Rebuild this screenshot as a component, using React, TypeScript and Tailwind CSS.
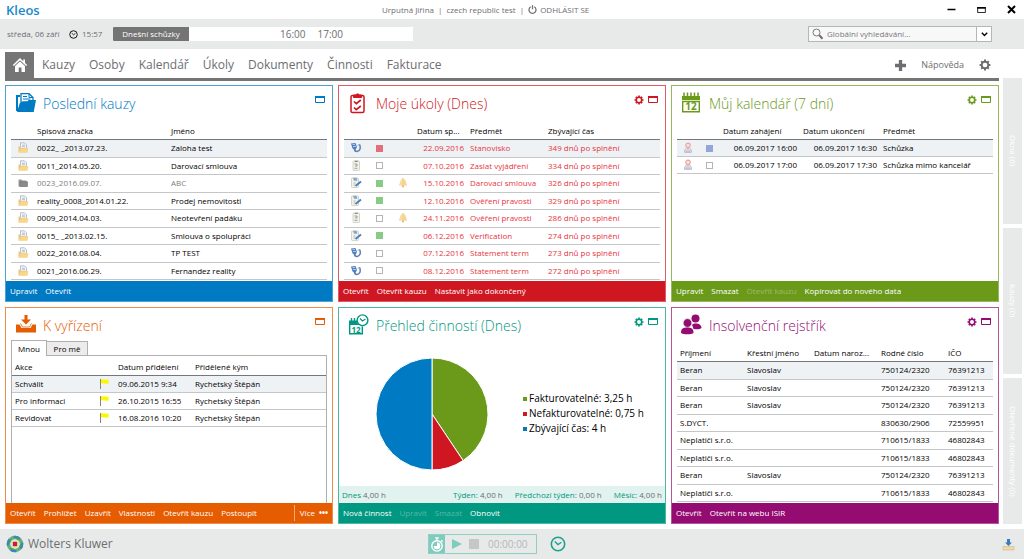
import { ReactNode } from 'react';

interface IconProps {
  className?: string;
}

interface IColumn {
  label: string;
  width?: string;
  align?: 'right' | 'center';
}

interface IRow {
  cells: ReactNode[];
  className?: string;
}

interface IAction {
  label: string;
  disabled?: boolean;
}

const GearIcon = ({ className }: IconProps) => (
  <svg viewBox="0 0 12 12" className={className} fill="none" stroke="currentColor" aria-hidden="true">
    <circle cx="6" cy="6" r="3.3" strokeWidth="1.9" />
    <path
      strokeWidth="2"
      d="M6 .6v2M6 9.4v2M.6 6h2M9.4 6h2M2.2 2.2l1.3 1.3M8.5 8.5l1.3 1.3M2.2 9.8l1.3-1.3M8.5 3.5l1.3-1.3"
    />
  </svg>
);

const WindowIcon = ({ className }: IconProps) => (
  <svg viewBox="0 0 10 7" className={className} fill="none" stroke="currentColor" aria-hidden="true">
    <path d="M.5 .5h9v6h-9z" />
    <path d="M0 1h10" strokeWidth="2" />
  </svg>
);

const ClockIcon = ({ className }: IconProps) => (
  <svg viewBox="0 0 16 16" className={className} fill="none" stroke="currentColor" aria-hidden="true">
    <circle cx="8" cy="8" r="6.7" strokeWidth="1.6" />
    <path d="M4.800 5.500L8 8.600l3.400-2.400" strokeWidth="1.400" />
  </svg>
);

const HomeIcon = () => (
  <svg viewBox="0 0 16 16" className="h-4 w-4" fill="currentColor" aria-hidden="true">
    <path d="M8 1L.8 8l1 1L8 3.2 14.200 9l1-1-2.200-2.100V2.500h-1.800v1.700z" />
    <path d="M3 9l5-4.600L13 9v6H9.500v-4.500h-2.800V15H3z" />
  </svg>
);

const CasesIcon = () => (
  <svg viewBox="0 0 22 22" className="h-[22px] w-[22px]" aria-hidden="true">
    <path d="M2 19V4h3" fill="none" stroke="currentColor" strokeWidth="2" />
    <path d="M6 10V1.700h8l4 3.800V10" fill="#fff" stroke="currentColor" strokeWidth="1.300" />
    <path d="M14 1.700v3.800h4M8 4.500h4M8 7h7.500" fill="none" stroke="currentColor" />
    <path d="M8 9.300h4.500l1.200-1.300H21l-2.300 12H2l3-9.500z" fill="currentColor" />
  </svg>
);

const TasksIcon = () => (
  <svg viewBox="0 0 22 22" className="h-[22px] w-[22px]" fill="none" stroke="currentColor" aria-hidden="true">
    <rect x="3" y="3.500" width="13" height="17" rx="1.500" strokeWidth="1.500" />
    <path d="M5.500 5.500V3H8a1.700 1.700 0 013.200 0h2.500v2.500z" fill="currentColor" />
    <path d="M6 9.500l2.300 2.200L12.800 8M6 15.500l2.300 2.200 4.500-3.700" strokeWidth="1.700" />
  </svg>
);

const CalendarIcon = () => (
  <svg viewBox="0 0 22 22" className="h-[22px] w-[22px]" aria-hidden="true">
    <path d="M3 .5v4M6.500 .5v4M10 .5v4M13.500 .5v4M17 .5v4" stroke="currentColor" strokeWidth="1.500" />
    <path d="M1 4h18v4H1z" fill="currentColor" />
    <path d="M1.700 9.500h16.600v10.300H1.700z" fill="none" stroke="currentColor" strokeWidth="1.400" />
    <text x="10" y="18.200" textAnchor="middle" fontSize="10" fontWeight="700" fill="currentColor">
      12
    </text>
  </svg>
);

const InboxIcon = () => (
  <svg viewBox="0 0 22 22" className="h-[22px] w-[22px]" fill="currentColor" aria-hidden="true">
    <path d="M9.500 1h3v4.500h3.500L11 10.500 6 5.500h3.500z" />
    <path d="M1 10.500h3.500l2 3.500h9l2-3.500H21v8H1z" />
    <path d="M5.500 9.500l2 3.500h7l2-3.500" fill="none" stroke="currentColor" strokeWidth=".8" />
  </svg>
);

const ActivitiesIcon = () => (
  <svg viewBox="0 0 22 22" className="h-[22px] w-[22px]" aria-hidden="true">
    <path d="M3.500 4v3M6.500 4v3" stroke="currentColor" strokeWidth="1.400" />
    <path d="M1 6.500h8v3h6v1.500H1z" fill="currentColor" />
    <path d="M1.700 11v8.800h12.600V12.500" fill="none" stroke="currentColor" strokeWidth="1.400" />
    <text x="8" y="18.600" textAnchor="middle" fontSize="8" fontWeight="700" fill="currentColor">
      12
    </text>
    <circle cx="14.500" cy="6.300" r="5.400" fill="#fff" stroke="currentColor" strokeWidth="1.400" />
    <path d="M12 4.500L14.500 7l3-2" fill="none" stroke="currentColor" strokeWidth="1.200" />
  </svg>
);

const PeopleIcon = () => (
  <svg viewBox="0 0 22 22" className="h-[22px] w-[22px]" fill="currentColor" aria-hidden="true">
    <circle cx="14.500" cy="4.500" r="4" />
    <path d="M11 10.500c2-1.800 9.500-1.800 9.500 3.500-1.500 1.500-5 1.500-8 1z" />
    <circle cx="6.500" cy="9" r="4.400" stroke="#fff" strokeWidth=".7" />
    <path d="M0 19c0-5 2.500-5.500 6.200-5.500s6.300.5 6.300 5.500c-2 1.800-10.500 1.800-12.500 0z" />
  </svg>
);

const FolderRowIcon = () => (
  <svg viewBox="0 0 12 12" className="mx-auto h-3 w-3" aria-hidden="true">
    <path d="M3.500 6V.8h4l2 2V8" fill="#f4f6fa" stroke="#9aa7bd" strokeWidth=".7" />
    <path d="M5 3.200h3M5 4.700h3" stroke="#8c9bb5" strokeWidth=".6" />
    <path d="M1.500 10.500V4.500h2l1 1.500h6v4.500z" fill="#edc57a" />
    <path d="M1.500 10.500L4 6.500h7.500L10 10.500z" fill="#f8d78c" />
  </svg>
);

const ClosedFolderRowIcon = () => (
  <svg viewBox="0 0 12 12" className="mx-auto h-3 w-3" aria-hidden="true">
    <path d="M1.500 9.500V2.500h3l1 1h4V9.500z" fill="#999" />
    <path d="M3 4.800h7.500V9.500H3z" fill="#8b8b8b" stroke="#6f6f6f" strokeWidth=".6" />
  </svg>
);

const HearingIcon = () => (
  <svg viewBox="0 0 12 12" className="mx-auto h-3 w-3" aria-hidden="true">
    <path d="M1 1.500l4.500-.5 1.500 4-1.500 3-3-1.500z" fill="#4f7fc0" />
    <path d="M2.500 2.500h2.500M3 4.500h3" stroke="#dce8f7" strokeWidth=".7" />
    <path d="M9.800 3c1.200 3 .2 6-2.800 6.500-1.800 0-2.500-1-2.500-2.500" fill="none" stroke="#5a7fb4" strokeWidth="1.500" />
    <path d="M7.800 3.200l2.500-.8" stroke="#7c93b6" />
  </svg>
);

const NoteIcon = () => (
  <svg viewBox="0 0 12 12" className="mx-auto h-3 w-3" aria-hidden="true">
    <rect x="3" y="1" width="6.500" height="9.500" rx=".8" fill="#f4f3ea" stroke="#c4c4ba" strokeWidth=".7" />
    <path d="M4.800 .7h3v1.300h-3z" fill="#8c8c8c" />
    <path d="M4.500 4h2.500v2H5M4.500 8.300h3" fill="none" stroke="#8d9791" strokeWidth=".9" />
  </svg>
);

const NotePenIcon = () => (
  <svg viewBox="0 0 12 12" className="mx-auto h-3 w-3" aria-hidden="true">
    <rect x="1.500" y="1" width="7" height="9.500" rx=".8" fill="#f4f3ea" stroke="#c4c4ba" strokeWidth=".7" />
    <path d="M3 .8h3.500l1 3H4z" fill="#8aa5c8" />
    <path d="M5.500 9l5.500-4.500" stroke="#4a7fc4" strokeWidth="2" />
    <path d="M3.500 6h2M3.500 8h1.500" stroke="#9aa4a0" strokeWidth=".8" />
  </svg>
);

const BellIcon = () => (
  <svg viewBox="0 0 12 12" className="mx-auto h-3 w-3" aria-hidden="true">
    <path d="M6 1c.8 0 1 .7 1 1 2 1 1.800 4.200 3.200 6.500H1.800C3.200 6.200 3 3 5 2c0-.3.2-1 1-1z" fill="#f5d391" />
    <path d="M6 2.500c-1.800 1-1.500 4-2.500 6" fill="none" stroke="#fae6b8" />
    <circle cx="6" cy="9.300" r="1.100" fill="#e0b569" />
  </svg>
);

const PersonRowIcon = () => (
  <svg viewBox="0 0 12 12" className="mx-auto h-3 w-3" aria-hidden="true">
    <circle cx="6" cy="3.300" r="2.200" fill="#fbe4dc" stroke="#eba99c" strokeWidth="1.200" />
    <path d="M2.500 10.300c0-3 1-4.500 3.500-4.500s3.500 1.500 3.500 4.500z" fill="#e9ecf7" stroke="#a5aed0" strokeWidth=".8" />
    <path d="M6 6v4.300M4.300 8v2.300M7.700 8v2.300" stroke="#d9a09f" strokeWidth=".8" />
  </svg>
);

const FlagIcon = () => (
  <svg viewBox="0 0 12 12" className="mx-auto h-3 w-3" aria-hidden="true">
    <path d="M1.500 1v10" stroke="#858585" />
    <path d="M2 1.500c2-.8 4 .8 7.500 0V5.500c-3 .8-5.500-.8-7.500 0z" fill="#fcf800" />
  </svg>
);

const WkLogo = () => (
  <svg viewBox="0 0 18 18" className="h-[18px] w-[18px]" aria-hidden="true">
    <circle cx="9" cy="9" r="8.300" fill="#5fae8b" />
    <circle cx="9" cy="9" r="7.200" fill="none" stroke="#3a86c4" strokeWidth="2.200" strokeDasharray="6.300 5" strokeDashoffset="1.500" />
    <circle cx="9" cy="9" r="5.200" fill="#8cc63f" />
    <circle cx="9" cy="9" r="5.600" fill="none" stroke="#4fa04b" strokeWidth="1.400" strokeDasharray="4.400 4.400" />
    <path d="M9 4l3.600 1.400L14 9l-1.400 3.600L9 14l-3.600-1.400L4 9l1.400-3.600z" fill="#d6ecc0" />
    <rect x="6.800" y="6.800" width="4.400" height="4.400" rx=".8" fill="#d4174a" />
  </svg>
);

const StopwatchIcon = () => (
  <svg viewBox="0 0 16 18" className="h-[17px] w-4" fill="none" stroke="currentColor" aria-hidden="true">
    <circle cx="8" cy="10.500" r="5.500" strokeWidth="1.500" />
    <path d="M6 2h4M8 2v3M12.500 4.500l1.500 1.500" strokeWidth="1.400" />
    <path d="M8 10.500V7a3.500 3.500 0 11-3.500 3.500z" fill="currentColor" stroke="none" />
  </svg>
);

const Mark = ({ className }: IconProps) => (
  <span className={`mx-auto block h-[7px] w-[7px] border ${className}`} />
);

const emptyMark = <Mark className="border-[#b4b4b4] bg-white" />;
const redMark = <Mark className="border-[#e0707a] bg-[#e0707a]" />;
const greenMark = <Mark className="border-[#86cc86] bg-[#86cc86]" />;
const blueMark = <Mark className="border-[#95a5dc] bg-[#95a5dc]" />;

const alignClass = (column: IColumn) => {
  if (column.align === 'right') return 'text-right pr-[3px]';
  if (column.align === 'center') return 'px-0';
  return 'pl-[3px]';
};

const DataTable = ({
  columns,
  rows,
  className = '',
}: {
  columns: IColumn[];
  rows: IRow[];
  className?: string;
}) => (
  <table className={`w-full table-fixed border-separate border-spacing-0 leading-3 text-black ${className}`}>
    <colgroup>
      {columns.map((column, index) => (
        <col key={index} className={column.width} />
      ))}
    </colgroup>
    <thead>
      <tr className="h-[17px]">
        {columns.map((column, index) => (
          <th
            key={index}
            className="truncate border-b border-[#737780] p-0 pl-[3px] text-left font-normal"
          >
            {column.label}
          </th>
        ))}
      </tr>
    </thead>
    <tbody>
      {rows.map((row, index) => (
        <tr key={index} className={`${row.className ?? ''} ${index === 0 ? 'bg-[#eff2f5]' : ''}`}>
          {row.cells.map((cell, cellIndex) => (
            <td
              key={cellIndex}
              className={`h-[17px] whitespace-nowrap border-b border-[#c4c6c8] py-0 ${alignClass(columns[cellIndex])}`}
            >
              {cell}
            </td>
          ))}
        </tr>
      ))}
    </tbody>
  </table>
);

const Panel = ({
  title,
  icon,
  borderClass,
  textClass,
  barClass,
  actions,
  hasSettings,
  more,
  children,
}: {
  title: string;
  icon: ReactNode;
  borderClass: string;
  textClass: string;
  barClass: string;
  actions: IAction[];
  hasSettings?: boolean;
  more?: boolean;
  children: ReactNode;
}) => (
  <section className={`flex min-w-0 flex-col border ${borderClass}`}>
    <header className={`flex h-[37px] items-start gap-[6px] pl-[9px] pr-[7px] pt-[6px] ${textClass}`}>
      {icon}
      <h2 className="flex-1 whitespace-nowrap text-[14px] font-light leading-6">{title}</h2>
      <div className="flex items-center gap-1 pt-[2px]">
        {hasSettings && (
          <button type="button" aria-label="Nastavení">
            <GearIcon className="h-[10px] w-[10px]" />
          </button>
        )}
        <button type="button" aria-label="Maximalizovat" className="py-[2px]">
          <WindowIcon className="h-[7px] w-[10px]" />
        </button>
      </div>
    </header>
    <div className="flex flex-1 flex-col">{children}</div>
    <footer className={`flex h-5 items-center gap-[8px] px-1 text-white ${barClass}`}>
      {actions.map((action) => (
        <button
          key={action.label}
          type="button"
          disabled={action.disabled}
          className="whitespace-nowrap disabled:opacity-30"
        >
          {action.label}
        </button>
      ))}
      {more && (
        <button type="button" className="ml-auto flex h-4 items-center gap-1 border-l border-white/50 pl-[5px]">
          Více <span className="font-bold">•••</span>
        </button>
      )}
    </footer>
  </section>
);

const caseColumns: IColumn[] = [
  { label: '', width: 'w-[23px]', align: 'center' },
  { label: 'Spisová značka', width: 'w-[134px]' },
  { label: 'Jméno' },
];

const cases = [
  ['0022_ _2013.07.23.', 'Zaloha test'],
  ['0011_2014.05.20.', 'Darovací smlouva'],
  ['0023_2016.09.07.', 'ABC'],
  ['reality_0008_2014.01.22.', 'Prodej nemovitosti'],
  ['0009_2014.04.03.', 'Neotevření padáku'],
  ['0015_ _2013.02.15.', 'Smlouva o spolupráci'],
  ['0022_2016.08.04.', 'TP TEST'],
  ['0021_2016.06.29.', 'Fernandez reality'],
];

const caseRows: IRow[] = cases.map(([number, name]) => {
  const closed = name === 'ABC';
  return {
    cells: [closed ? <ClosedFolderRowIcon /> : <FolderRowIcon />, number, name],
    className: closed ? 'text-[#808080]' : '',
  };
});

const taskColumns: IColumn[] = [
  { label: '', width: 'w-[23px]', align: 'center' },
  { label: '', width: 'w-[24px]', align: 'center' },
  { label: '', width: 'w-[23px]', align: 'center' },
  { label: 'Datum sp...', width: 'w-[53px]', align: 'right' },
  { label: 'Předmět', width: 'w-[78px]' },
  { label: 'Zbývající čas' },
];

const taskRows: IRow[] = [
  [<HearingIcon />, redMark, null, '22.09.2016', 'Stanovisko', '349 dnů po splnění'],
  [<NoteIcon />, emptyMark, null, '07.10.2016', 'Zaslat vyjádření', '334 dnů po splnění'],
  [<NotePenIcon />, greenMark, <BellIcon />, '15.10.2016', 'Darovací smlouva', '326 dnů po splnění'],
  [<NotePenIcon />, greenMark, null, '12.10.2016', 'Ověření pravosti', '329 dnů po splnění'],
  [<NoteIcon />, emptyMark, <BellIcon />, '24.11.2016', 'Ověření pravosti', '286 dnů po splnění'],
  [<NotePenIcon />, greenMark, null, '06.12.2016', 'Verification', '274 dnů po splnění'],
  [<HearingIcon />, emptyMark, null, '07.12.2016', 'Statement term', '273 dnů po splnění'],
  [<HearingIcon />, emptyMark, null, '08.12.2016', 'Statement term', '272 dnů po splnění'],
].map((cells) => ({ cells, className: 'text-[#e8343d]' }));

const calendarColumns: IColumn[] = [
  { label: '', width: 'w-[21px]', align: 'center' },
  { label: '', width: 'w-[22px]', align: 'center' },
  { label: 'Datum zahájení', width: 'w-[80px]', align: 'right' },
  { label: 'Datum ukončení', width: 'w-[80px]', align: 'right' },
  { label: 'Předmět' },
];

const calendarRows: IRow[] = [
  { cells: [<PersonRowIcon />, blueMark, '06.09.2017 16:00', '06.09.2017 16:30', 'Schůzka'] },
  { cells: [<PersonRowIcon />, emptyMark, '06.09.2017 17:00', '06.09.2017 17:30', 'Schůzka mimo kancelář'] },
];

const approvalColumns: IColumn[] = [
  { label: 'Akce', width: 'w-[83px]' },
  { label: '', width: 'w-[20px]', align: 'center' },
  { label: 'Datum přidělení', width: 'w-[77px]' },
  { label: 'Přidělené kým' },
];

const approvalRows: IRow[] = [
  ['Schválit', '09.06.2015 9:34'],
  ['Pro informaci', '26.10.2015 16:55'],
  ['Revidovat', '16.08.2016 10:20'],
].map(([action, date]) => ({ cells: [action, <FlagIcon />, date, 'Rychetský Štěpán'] }));

const insolvencyColumns: IColumn[] = [
  { label: 'Příjmení', width: 'w-[67px]' },
  { label: 'Křestní jméno', width: 'w-[67px]' },
  { label: 'Datum naroz...', width: 'w-[67px]' },
  { label: 'Rodné číslo', width: 'w-[67px]' },
  { label: 'IČO' },
];

const insolvencyRows: IRow[] = [
  ['Beran', 'Slavoslav', '', '750124/2320', '76391213'],
  ['Beran', 'Slavoslav', '', '750124/2320', '76391213'],
  ['Beran', 'Slavoslav', '', '750124/2320', '76391213'],
  ['S.DYCT.', '', '', '830630/2906', '72559951'],
  ['Neplatiči s.r.o.', '', '', '710615/1833', '46802843'],
  ['Neplatiči s.r.o.', '', '', '710615/1833', '46802843'],
  ['Beran', 'Slavoslav', '', '750124/2320', '76391213'],
  ['Neplatiči s.r.o.', '', '', '710615/1833', '46802843'],
].map((cells) => ({ cells }));

const activity = [
  { label: 'Fakturovatelné: 3,25 h', hours: 3.25, fill: '#6b9a1b', dot: 'bg-[#6b9a1b]' },
  { label: 'Nefakturovatelné: 0,75 h', hours: 0.75, fill: '#cf1722', dot: 'bg-[#cf1722]' },
  { label: 'Zbývající čas: 4 h', hours: 4, fill: '#007ac3', dot: 'bg-[#007ac3]' },
];

const PieChart = () => {
  const total = activity.reduce((sum, item) => sum + item.hours, 0);
  const point = (hours: number) => {
    const angle = (hours / total) * Math.PI * 2;
    return `${57 + 56 * Math.sin(angle)} ${57 - 56 * Math.cos(angle)}`;
  };
  let start = 0;
  return (
    <svg viewBox="0 0 114 114" className="h-[114px] w-[114px]" role="img" aria-label="Přehled činností">
      {activity.map((item) => {
        const from = start;
        start += item.hours;
        return (
          <path
            key={item.label}
            d={`M57 57L${point(from)}A56 56 0 0 1 ${point(start)}Z`}
            fill={item.fill}
            stroke="#fff"
            strokeWidth="1"
          />
        );
      })}
    </svg>
  );
};

const navItems = ['Kauzy', 'Osoby', 'Kalendář', 'Úkoly', 'Dokumenty', 'Činnosti', 'Fakturace'];
const sideTabs = ['Okna (0)', 'Kauzy (0)', 'Otevřené dokumenty (0)'];

const summary = [
  { label: 'Týden:', value: '4,00 h' },
  { label: 'Předchozí týden:', value: '0,00 h' },
  { label: 'Měsíc:', value: '4,00 h' },
];

export default function App() {
  return (
    <div className="flex min-h-screen flex-col bg-white font-['Open_Sans','Noto_Sans',sans-serif] text-[8px] leading-3 text-[#6d6e71]">
      <div className="flex h-[19px] items-center pl-[6px] pr-2">
        <div className="w-[376px] text-[13px] font-semibold leading-4 text-[#1a8acb]">Kleos</div>
        <div className="flex items-center gap-1">
          <span>Urputná Jiřina</span>
          <span>|</span>
          <span>czech republic test</span>
          <span>|</span>
          <button type="button" className="flex items-center gap-[3px]">
            <svg viewBox="0 0 10 10" className="h-[9px] w-[9px]" fill="none" stroke="currentColor" strokeWidth="1.400" aria-hidden="true">
              <path d="M3 2a3.900 3.900 0 104 0M5 .3v4.500" />
            </svg>
            ODHLÁSIT SE
          </button>
        </div>
        <div className="ml-auto flex items-center gap-[21px] text-black">
          <button type="button" aria-label="Minimalizovat">
            <svg viewBox="0 0 9 9" className="h-[9px] w-[9px]" stroke="currentColor" strokeWidth="1.500" aria-hidden="true">
              <path d="M.5 4.500h8" />
            </svg>
          </button>
          <button type="button" aria-label="Obnovit okno">
            <WindowIcon className="h-[6px] w-[9px]" />
          </button>
          <button type="button" aria-label="Zavřít">
            <svg viewBox="0 0 9 9" className="h-[9px] w-[9px]" stroke="currentColor" strokeWidth="2" aria-hidden="true">
              <path d="M1 1l7 7M8 1L1 8" />
            </svg>
          </button>
        </div>
      </div>

      <div className="flex h-[30px] items-center bg-[#e8eaea] pl-[7px] pr-8">
        <span className="w-[62px] whitespace-nowrap">středa, 06 září</span>
        <ClockIcon className="h-[9px] w-[9px] text-black" />
        <span className="w-[35px] pl-1">15:57</span>
        <div className="flex h-[14px] w-[300px] items-center bg-white">
          <span className="flex h-full w-[76px] items-center justify-center rounded-l-[1px] bg-[#747474] text-white">
            Dnešní schůzky
          </span>
          <span className="ml-auto mr-[12px] text-[10px]">16:00</span>
          <span className="mr-[70px] text-[10px]">17:00</span>
        </div>
        <div className="ml-auto flex h-[16px] w-[184px] border border-[#b4b6b8] bg-[#f8f8f8]">
          <label htmlFor="search" className="flex items-center pl-[3px]" aria-label="Globální vyhledávání">
            <svg viewBox="0 0 12 12" className="h-3 w-3" fill="none" stroke="currentColor" aria-hidden="true">
              <circle cx="4.500" cy="4.500" r="3.500" strokeWidth=".9" />
              <path d="M7.300 7.300l3.200 3.400" strokeWidth="2" />
            </svg>
          </label>
          <input
            id="search"
            type="text"
            placeholder="Globální vyhledávání..."
            className="min-w-0 flex-1 pl-[3px] outline-none placeholder:text-[#77787b]"
          />
          <button type="button" aria-label="Rozbalit" className="flex w-[15px] items-center justify-center border-l border-[#b4b6b8] bg-white text-black">
            <svg viewBox="0 0 7 5" className="h-[5px] w-[7px]" fill="none" stroke="currentColor" strokeWidth="1.400" aria-hidden="true">
              <path d="M.8 .8l2.700 2.700L6.200 .8" />
            </svg>
          </button>
        </div>
      </div>

      <div className="flex flex-1 gap-1 pb-[5px] pl-[5px] pr-[2px] pt-[3px]">
        <div className="flex min-w-0 flex-1 flex-col gap-1">
          <nav className="flex h-[29px] items-center border-b-3 border-[#757575] text-[12px]">
            <a href="#home" aria-label="Domů" className="flex h-full w-[29px] items-center justify-center bg-[#757575] text-white">
              <HomeIcon />
            </a>
            <div className="flex gap-[14px] pl-2">
              {navItems.map((item) => (
                <a key={item} href={`#${item}`} className="leading-5">
                  {item}
                </a>
              ))}
            </div>
            <div className="ml-auto flex items-center gap-[15px] pr-2">
              <button type="button" aria-label="Přidat">
                <svg viewBox="0 0 10 10" className="h-[11px] w-[11px]" stroke="currentColor" strokeWidth="3" aria-hidden="true">
                  <path d="M5 0v10M0 5h10" />
                </svg>
              </button>
              <a href="#help" className="text-[9px]">
                Nápověda
              </a>
              <button type="button" aria-label="Nastavení aplikace">
                <GearIcon className="h-3 w-3" />
              </button>
            </div>
          </nav>

          <main className="grid flex-1 auto-rows-fr grid-cols-3 gap-[5px]">
            <Panel
              title="Poslední kauzy"
              icon={<CasesIcon />}
              borderClass="border-[#007ac3]/70"
              textClass="text-[#007ac3]"
              barClass="bg-[#007ac3]"
              actions={[{ label: 'Upravit' }, { label: 'Otevřít' }]}
            >
              <div className="px-[5px]">
                <DataTable columns={caseColumns} rows={caseRows} className="h-[157px]" />
              </div>
            </Panel>

            <Panel
              title="Moje úkoly (Dnes)"
              icon={<TasksIcon />}
              borderClass="border-[#cf1722]/70"
              textClass="text-[#cf1722]"
              barClass="bg-[#cf1722]"
              hasSettings
              actions={[{ label: 'Otevřít' }, { label: 'Otevřít kauzu' }, { label: 'Nastavit jako dokončený' }]}
            >
              <div className="px-[5px]">
                <DataTable columns={taskColumns} rows={taskRows} className="h-[157px]" />
              </div>
            </Panel>

            <Panel
              title="Můj kalendář (7 dní)"
              icon={<CalendarIcon />}
              borderClass="border-[#6b9a1b]/70"
              textClass="text-[#6b9a1b]"
              barClass="bg-[#6b9a1b]"
              hasSettings
              actions={[
                { label: 'Upravit' },
                { label: 'Smazat' },
                { label: 'Otevřít kauzu', disabled: true },
                { label: 'Kopírovat do nového data' },
              ]}
            >
              <div className="px-[5px]">
                <DataTable columns={calendarColumns} rows={calendarRows} />
              </div>
            </Panel>

            <Panel
              title="K vyřízení"
              icon={<InboxIcon />}
              borderClass="border-[#e65c00]/70"
              textClass="text-[#e65c00]"
              barClass="bg-[#e65c00]"
              more
              actions={[
                { label: 'Otevřít' },
                { label: 'Prohlížet' },
                { label: 'Uzavřít' },
                { label: 'Vlastnosti' },
                { label: 'Otevřít kauzu' },
                { label: 'Postoupit' },
              ]}
            >
              <div className="flex flex-1 flex-col px-[5px]">
                <div role="tablist" className="-mt-[6px] flex h-4 items-end text-black">
                  <button
                    type="button"
                    role="tab"
                    aria-selected="true"
                    className="relative top-px h-4 w-[36px] border border-b-0 border-[#b0b0b0] bg-white"
                  >
                    Mnou
                  </button>
                  <button
                    type="button"
                    role="tab"
                    aria-selected="false"
                    className="h-[14px] w-[41px] border border-b-0 border-l-0 border-[#b0b0b0] bg-[#ececec]"
                  >
                    Pro mě
                  </button>
                </div>
                <div className="flex-1 border border-b-0 border-[#b0b0b0] pt-[3px]">
                  <DataTable columns={approvalColumns} rows={approvalRows} />
                </div>
              </div>
            </Panel>

            <Panel
              title="Přehled činností (Dnes)"
              icon={<ActivitiesIcon />}
              borderClass="border-[#009881]/70"
              textClass="text-[#009881]"
              barClass="bg-[#009881]"
              hasSettings
              actions={[
                { label: 'Nová činnost' },
                { label: 'Upravit', disabled: true },
                { label: 'Smazat', disabled: true },
                { label: 'Obnovit' },
              ]}
            >
              <div className="flex flex-1 items-center gap-[34px] pb-1 pl-[36px]">
                <PieChart />
                <ul className="text-[10px] leading-[15px] text-black">
                  {activity.map((item) => (
                    <li key={item.label} className="flex items-center gap-[2px] whitespace-nowrap">
                      <span className={`h-1 w-1 ${item.dot}`} />
                      {item.label}
                    </li>
                  ))}
                </ul>
              </div>
              <div className="flex h-[17px] items-center justify-end gap-3 bg-[#e1f2ef] px-[3px]">
                <span className="mr-auto">
                  <span className="text-[#009881]">Dnes</span> 4,00 h
                </span>
                {summary.map((item) => (
                  <span key={item.label}>
                    <span className="text-[#009881]">{item.label}</span> {item.value}
                  </span>
                ))}
              </div>
            </Panel>

            <Panel
              title="Insolvenční rejstřík"
              icon={<PeopleIcon />}
              borderClass="border-[#940c72]/70"
              textClass="text-[#940c72]"
              barClass="bg-[#940c72]"
              hasSettings
              actions={[{ label: 'Otevřít' }, { label: 'Otevřít na webu ISIR' }]}
            >
              <div className="px-[5px]">
                <DataTable columns={insolvencyColumns} rows={insolvencyRows} className="h-[157px]" />
              </div>
            </Panel>
          </main>
        </div>

        <aside className="flex w-[19px] flex-col gap-1 pt-[26px]">
          {sideTabs.map((tab) => (
            <button
              key={tab}
              type="button"
              className="flex flex-1 items-center justify-center bg-[#e8eaea] text-white [writing-mode:vertical-rl]"
            >
              {tab}
            </button>
          ))}
        </aside>
      </div>

      <footer className="flex h-[30px] items-center bg-[#e8eaea] pl-[6px] pr-[9px]">
        <div className="flex w-[422px] items-center gap-1 text-[12px]">
          <WkLogo />
          Wolters Kluwer
        </div>
        <div className="flex h-5 w-[109px] items-center border border-[#8fd0c4] text-[#7fcbbd]">
          <button type="button" aria-label="Stopky" className="flex h-full w-4 items-center justify-center bg-[#7fcbbd] text-white">
            <StopwatchIcon />
          </button>
          <button type="button" aria-label="Spustit" className="pl-[7px]">
            <svg viewBox="0 0 10 10" className="h-[10px] w-[10px]" fill="currentColor" aria-hidden="true">
              <path d="M0 0l10 5-10 5z" />
            </svg>
          </button>
          <button type="button" aria-label="Zastavit" className="pl-[7px]">
            <span className="block h-[10px] w-[10px] bg-[#c6c8c8]" />
          </button>
          <span className="pl-[9px] text-[10px] text-[#b4b6b6]">00:00:00</span>
        </div>
        <button type="button" aria-label="Čas" className="ml-[13px] text-[#1fa18c]">
          <ClockIcon className="h-4 w-4" />
        </button>
        <button type="button" aria-label="Stáhnout" className="ml-auto">
          <svg viewBox="0 0 13 13" className="h-[13px] w-[13px]" aria-hidden="true">
            <path d="M1 8.500h11v3.500H1z" fill="#efd9a6" stroke="#cdb98d" strokeWidth=".6" />
            <path d="M5 1h3v3.500h2L6.500 8 3 4.500h2z" fill="#3d78b8" />
          </svg>
        </button>
      </footer>
    </div>
  );
}
